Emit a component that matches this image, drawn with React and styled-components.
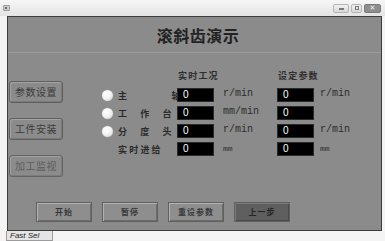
import React from "react";
import styled, { createGlobalStyle } from "styled-components";

const GlobalStyle = createGlobalStyle`
  html, body {
    margin: 0;
    padding: 0;
    background: #f7f7f7;
    overflow: hidden;
  }
  * {
    box-sizing: border-box;
  }
`;

const CJK = `"Noto Sans CJK SC", "DejaVu Sans", sans-serif`;

const Window = styled.div`
  width: 385px;
  height: 241px;
  display: flex;
  flex-direction: column;
  background: #f4f4f4;
`;

const TitleBar = styled.div`
  height: 16px;
  display: flex;
  align-items: center;
  padding: 0 4px 0 3px;
  background: linear-gradient(#f6f6f6, #e4e4e4);
`;

const AppIcon = styled.div`
  width: 7px;
  height: 6px;
  background: #cfcfcf;
  border: 1px solid #9a9a9a;
  border-radius: 1px;
  position: relative;
  &::after {
    content: "";
    position: absolute;
    left: 1px;
    top: 1px;
    width: 2px;
    height: 2px;
    background: #666;
  }
`;

const Controls = styled.div`
  margin-left: auto;
  display: flex;
  gap: 2px;
`;

const WinButton = styled.div`
  width: ${(p) => p.$w}px;
  height: 9px;
  border: 1px solid ${(p) => (p.$close ? "#7a7a7a" : "#b4b4b4")};
  border-radius: 2px;
  background: ${(p) => (p.$close ? "#8e8e8e" : "linear-gradient(#f2f2f2, #d8d8d8)")};
  display: flex;
  align-items: center;
  justify-content: center;
  color: ${(p) => (p.$close ? "#eee" : "#777")};
  font: 7px/1 "DejaVu Sans", sans-serif;
`;

const Dash = styled.span`
  width: 5px;
  height: 2px;
  background: #7a7a7a;
  margin-top: 2px;
`;

const Square = styled.span`
  width: 4px;
  height: 4px;
  border: 1px solid #777;
`;

const Panel = styled.div`
  margin-left: 7px;
  width: 375px;
  height: 215px;
  background: #8b8b8b;
  border: 1px solid #3c3c3c;
  display: flex;
  flex-direction: column;
`;

const Header = styled.div`
  height: 36px;
  border-bottom: 1px solid #9a9a9a;
  display: flex;
  align-items: center;
  justify-content: center;
  padding-left: 7px;
`;

const Title = styled.h1`
  margin: 0;
  font: 600 16px/1 ${CJK};
  letter-spacing: 0.5px;
  color: #222;
`;

const Body = styled.div`
  height: 149px;
  display: flex;
`;

const Nav = styled.div`
  margin-left: 1px;
  padding-top: 28px;
  display: flex;
  flex-direction: column;
  gap: 15px;
`;

const NavButton = styled.div`
  width: 54px;
  height: 22px;
  border: 1px solid #5e5e5e;
  border-radius: 3px;
  box-shadow: inset 1px 1px 0 #a4a4a4, inset -1px -1px 0 #7a7a7a;
  display: flex;
  align-items: center;
  justify-content: center;
  font: 10px/1 ${CJK};
  letter-spacing: 0.5px;
  color: ${(p) => (p.$dim ? "#555" : "#3c3c3c")};
  opacity: ${(p) => (p.$dim ? 0.85 : 1)};
`;

const Form = styled.div`
  margin-left: 37px;
  padding-top: 18px;
  display: grid;
  grid-template-columns: 18px 59px 37px 63px 37px auto;
  grid-template-rows: 13px repeat(4, 14px);
  row-gap: 4px;
  align-items: center;
`;

const ColHead = styled.div`
  grid-column: ${(p) => p.$col} / span 2;
  align-self: start;
  padding-left: 1px;
  font: 600 9px/10px ${CJK};
  letter-spacing: 1.2px;
  color: #2e2e2e;
`;

const Radio = styled.div`
  grid-column: 1;
  width: 11px;
  height: 11px;
  margin-left: 2px;
  border-radius: 50%;
  background: radial-gradient(circle at 40% 35%, #ffffff 0%, #f4f4f4 45%, #c8c8c8 100%);
  box-shadow: 0 0 0 0.5px #9a9a9a;
`;

const Label = styled.div`
  grid-column: 2;
  white-space: nowrap;
  font: 600 9px/1 ${CJK};
  letter-spacing: ${(p) => p.$ls}px;
  color: #2a2a2a;
`;

const Value = styled.div`
  grid-column: ${(p) => p.$col};
  height: 14px;
  background: #000;
  border: 1px solid #2a2a2a;
  color: #fff;
  font: 10px/12px "Liberation Sans", sans-serif;
  padding-left: 5px;
`;

const Unit = styled.div`
  grid-column: ${(p) => p.$col};
  padding-left: ${(p) => p.$pad}px;
  align-self: start;
  margin-top: ${(p) => (p.$small ? 3 : 1)}px;
  font: ${(p) => (p.$small ? 8 : 10)}px/1 "Liberation Mono", monospace;
  color: #2c2c2c;
`;

const ButtonBar = styled.div`
  padding-left: 28px;
  display: flex;
  gap: 10px;
`;

const Action = styled.div`
  width: 56px;
  height: 20px;
  background: ${(p) => (p.$dark ? "#5f5f5f" : "#8e8e8e")};
  border: 1px solid #606060;
  box-shadow: inset 1px 1px 0 ${(p) => (p.$dark ? "#7a7a7a" : "#b2b2b2")},
    inset -1px -1px 0 ${(p) => (p.$dark ? "#4a4a4a" : "#6c6c6c")};
  display: flex;
  align-items: center;
  justify-content: center;
  font: 600 8px/1 ${CJK};
  letter-spacing: 1px;
  color: ${(p) => (p.$dark ? "#262626" : "#383838")};
`;

const Tab = styled.div`
  margin-left: 6px;
  width: 47px;
  height: 10px;
  background: #e4e4e4;
  border: 1px solid #9c9c9c;
  border-top: none;
  padding-left: 3px;
  font: italic 8px/9px "Liberation Sans", sans-serif;
  color: #222;
`;

const rows = [
  { label: "主　　　　轴", ls: 1.7, radio: true, u1: "r/min", u2: "r/min" },
  { label: "工 作 台", ls: 5.6, radio: true, u1: "mm/min", u2: "" },
  { label: "分 度 头", ls: 5.6, radio: true, u1: "r/min", u2: "r/min" },
  { label: "实时进给", ls: 2.2, radio: false, u1: "mm", u2: "mm", small: true },
];

export default function App() {
  return (
    <Window>
      <GlobalStyle />
      <TitleBar>
        <AppIcon />
        <Controls>
          <WinButton $w={16}>
            <Dash />
          </WinButton>
          <WinButton $w={11}>
            <Square />
          </WinButton>
          <WinButton $w={17} $close>
            ✕
          </WinButton>
        </Controls>
      </TitleBar>
      <Panel>
        <Header>
          <Title>滚斜齿演示</Title>
        </Header>
        <Body>
          <Nav>
            <NavButton>参数设置</NavButton>
            <NavButton>工件安装</NavButton>
            <NavButton $dim>加工监视</NavButton>
          </Nav>
          <Form>
            <ColHead $col={3}>实时工况</ColHead>
            <ColHead $col={5}>设定参数</ColHead>
            {rows.map((r) => (
              <React.Fragment key={r.label}>
                {r.radio ? <Radio /> : <span />}
                <Label $ls={r.ls}>{r.label}</Label>
                <Value $col={3}>0</Value>
                <Unit $col={4} $pad={9} $small={r.small}>
                  {r.u1}
                </Unit>
                <Value $col={5}>0</Value>
                <Unit $col={6} $pad={6} $small={r.small}>
                  {r.u2}
                </Unit>
              </React.Fragment>
            ))}
          </Form>
        </Body>
        <ButtonBar>
          <Action>开始</Action>
          <Action>暂停</Action>
          <Action>重设参数</Action>
          <Action $dark>上一步</Action>
        </ButtonBar>
      </Panel>
      <Tab>Fast Sel</Tab>
    </Window>
  );
}
